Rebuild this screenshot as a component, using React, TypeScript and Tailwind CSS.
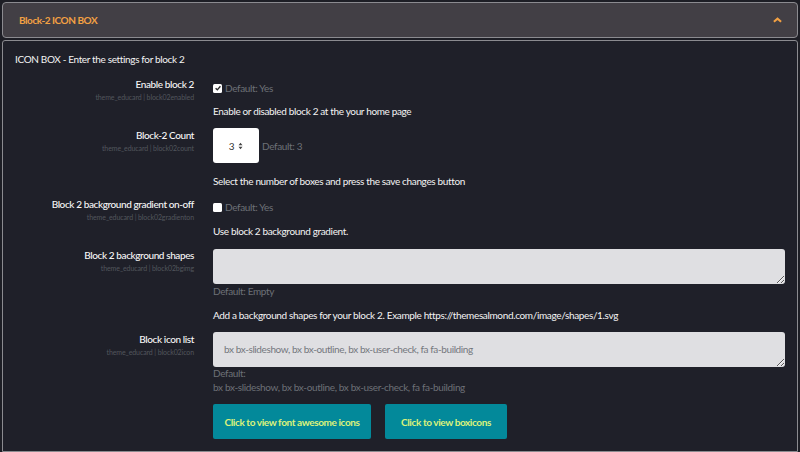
import React from "react";

const font = { fontFamily: "Lato, 'Open Sans', sans-serif" };

function Label({ title, sub }: { title: string; sub: string }) {
  return (
    <div className="flex flex-col items-end text-right">
      <div className="text-[10px] leading-[14px] font-medium tracking-[-0.4px] text-[#f7f7f7]">{title}</div>
      <div className="text-[7px] leading-[10px] tracking-[-0.1px] text-[#52565d] mt-[1px]">{sub}</div>
    </div>
  );
}

function Check({ checked }: { checked: boolean }) {
  return (
    <span className="inline-flex w-[9px] h-[9px] bg-white rounded-[1.5px] items-center justify-center mr-[3px]">
      {checked && (
        <svg viewBox="0 0 10 10" className="w-[8px] h-[8px]">
          <path d="M2 5.2 L4.2 7.3 L8 2.8" stroke="#2a2a2a" strokeWidth="1.7" fill="none" />
        </svg>
      )}
    </span>
  );
}

export default function App() {
  return (
    <div className="w-[800px] h-[452px] bg-[#1d1e25] overflow-hidden pt-[2px] px-[2px]" style={font}>
      <div className="h-[36px] border border-[#8b8b90] bg-[#423f45] rounded-[4px] flex items-center justify-between pl-[16px] pr-[15px]">
        <span className="text-[10px] font-bold tracking-[-0.45px] text-[#f3a143]">Block-2 ICON BOX</span>
        <svg viewBox="0 0 10 6" className="w-[9px] h-[6px]">
          <path d="M1 5 L5 1.5 L9 5" stroke="#f3a143" strokeWidth="2.2" fill="none" />
        </svg>
      </div>
      <div className="mt-[2px] h-[412px] border border-[#8b8b90] bg-[#1f2029] rounded-t-[3px] pl-[12px] pr-[12px] pt-[11px] text-[10px] leading-[14px] tracking-[-0.35px] text-[#f4f4f4]">
        <div>ICON BOX - Enter the settings for block 2</div>

        <div className="grid grid-cols-[179px_1fr] gap-x-[19px] mt-[11px]">
          {/* Row 1 */}
          <Label title="Enable block 2" sub="theme_educard | block02enabled" />
          <div>
            <div className="flex items-center mt-[4px] text-[#6d7077]">
              <Check checked />
              <span>Default: Yes</span>
            </div>
            <div className="mt-[9px]">Enable or disabled block 2 at the your home page</div>
          </div>

          {/* Row 2 */}
          <div className="mt-[10px]">
            <Label title="Block-2 Count" sub="theme_educard | block02count" />
          </div>
          <div className="mt-[10px]">
            <div className="flex items-center">
              <div className="w-[46px] h-[35px] bg-white rounded-[3px] flex items-center justify-center text-[#333]">
                <span className="text-[10px] mr-[4px]">3</span>
                <svg viewBox="0 0 6 10" className="w-[5px] h-[8px]">
                  <path d="M0.5 4 L3 1 L5.5 4 Z M0.5 6 L3 9 L5.5 6 Z" fill="#444" />
                </svg>
              </div>
              <span className="ml-[3px] text-[#6d7077]">Default: 3</span>
            </div>
            <div className="mt-[11px]">Select the number of boxes and press the save changes button</div>
          </div>

          {/* Row 3 */}
          <div className="mt-[9px]">
            <Label title="Block 2 background gradient on-off" sub="theme_educard | block02gradienton" />
          </div>
          <div className="mt-[9px]">
            <div className="flex items-center mt-[3px] text-[#6d7077]">
              <Check checked={false} />
              <span>Default: Yes</span>
            </div>
            <div className="mt-[10px]">Use block 2 background gradient.</div>
          </div>

          {/* Row 4 */}
          <div className="mt-[10px]">
            <Label title="Block 2 background shapes" sub="theme_educard | block02bgimg" />
          </div>
          <div className="mt-[11px]">
            <textarea
              readOnly
              className="block w-full h-[35px] bg-[#dfdfe2] rounded-[3px] px-[11px] pt-[10px] text-[10px] text-[#333] outline-none"
              style={font}
            />
            <div className="text-[#6d7077]">Default: Empty</div>
            <div className="mt-[10px]">Add a background shapes for your block 2. Example https://themesalmond.com/image/shapes/1.svg</div>
          </div>

          {/* Row 5 */}
          <div className="mt-[10px]">
            <Label title="Block icon list" sub="theme_educard | block02icon" />
          </div>
          <div className="mt-[10px]">
            <textarea
              readOnly
              placeholder="bx bx-slideshow, bx bx-outline, bx bx-user-check, fa fa-building"
              className="block w-full h-[35px] bg-[#dfdfe2] rounded-[3px] px-[11px] pt-[10px] text-[10px] leading-[14px] tracking-[-0.4px] text-[#333] placeholder:text-[#74777d] outline-none resize-y"
              style={font}
            />
            <div className="text-[#6d7077] leading-[13px]">Default:</div>
            <div className="text-[#6d7077] leading-[13px] mt-[1px]">bx bx-slideshow, bx bx-outline, bx bx-user-check, fa fa-building</div>
            <div className="flex gap-[14px] mt-[10px]">
              <button className="w-[158px] h-[35px] bg-[#03899a] rounded-[2px] text-[10px] font-bold tracking-[-0.4px] text-[#dcf27a]" style={font}>
                Click to view font awesome icons
              </button>
              <button className="w-[122px] h-[35px] bg-[#03899a] rounded-[2px] text-[10px] font-bold tracking-[-0.4px] text-[#dcf27a]" style={font}>
                Click to view boxicons
              </button>
            </div>
          </div>
        </div>
      </div>
    </div>
  );
}
